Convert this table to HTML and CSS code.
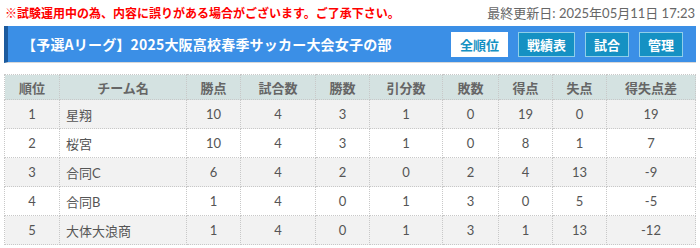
FILE: index.html
```html
<!DOCTYPE html>
<html lang="ja">
<head>
<meta charset="utf-8">
<link rel="stylesheet" href="styles.css">
</head>
<body>
<div class="page">
  <div class="topline">
    <span class="notice">※試験運用中の為、内容に誤りがある場合がございます。ご了承下さい。</span>
    <span class="updated">最終更新日: 2025年05月11日 17:23</span>
  </div>
  <div class="titlebar">
    <h1 class="title">【予選Aリーグ】2025大阪高校春季サッカー大会女子の部</h1>
    <nav class="btns">
      <a class="btn btn-active">全順位</a>
      <a class="btn">戦績表</a>
      <a class="btn">試合</a>
      <a class="btn">管理</a>
    </nav>
  </div>
  <table class="standings">
    <colgroup>
      <col class="c-rank"><col class="c-team"><col class="c-pts"><col class="c-gp"><col class="c-w">
      <col class="c-d"><col class="c-l"><col class="c-gf"><col class="c-ga"><col class="c-gd">
    </colgroup>
    <thead>
      <tr><th>順位</th><th>チーム名</th><th>勝点</th><th>試合数</th><th>勝数</th><th>引分数</th><th>敗数</th><th>得点</th><th>失点</th><th>得失点差</th></tr>
    </thead>
    <tbody>
      <tr><td>1</td><td class="team">星翔</td><td>10</td><td>4</td><td>3</td><td>1</td><td>0</td><td>19</td><td>0</td><td>19</td></tr>
      <tr><td>2</td><td class="team">桜宮</td><td>10</td><td>4</td><td>3</td><td>1</td><td>0</td><td>8</td><td>1</td><td>7</td></tr>
      <tr><td>3</td><td class="team">合同C</td><td>6</td><td>4</td><td>2</td><td>0</td><td>2</td><td>4</td><td>13</td><td>-9</td></tr>
      <tr><td>4</td><td class="team">合同B</td><td>1</td><td>4</td><td>0</td><td>1</td><td>3</td><td>0</td><td>5</td><td>-5</td></tr>
      <tr><td>5</td><td class="team">大体大浪商</td><td>1</td><td>4</td><td>0</td><td>1</td><td>3</td><td>1</td><td>13</td><td>-12</td></tr>
    </tbody>
  </table>
</div>
</body>
</html>
```

FILE: styles.css
```css
* { box-sizing: border-box; }
body {
  margin: 0;
  background: #fff;
  font-family: Lato, "Noto Sans CJK JP", sans-serif;
  color: #555;
}
.page { padding: 0 4px 0 4px; }
.topline {
  display: flex;
  justify-content: space-between;
  align-items: center;
  height: 26px;
  padding: 0 1px 2px 1px;
}
.notice {
  color: #f00;
  font-size: 12px;
  font-weight: bold;
  font-family: "Noto Sans CJK JP", sans-serif;
}
.updated {
  color: #666;
  font-size: 13px;
}
.titlebar {
  display: flex;
  align-items: center;
  justify-content: space-between;
  height: 37px;
  background: #3b8fe6;
  border-left: 4px solid #1b5a9e;
  border-bottom: 1px solid #d8d8d8;
  padding: 0 13px 0 14px;
}
.title {
  margin: 0;
  color: #fff;
  font-size: 14px;
  font-weight: bold;
  font-family: "Noto Sans CJK JP", sans-serif;
  letter-spacing: 0.2px;
}
.btns { display: flex; gap: 10px; }
.btn {
  display: block;
  height: 25px;
  line-height: 23px;
  padding: 0 8px;
  border: 1px solid #8fcfe9;
  background: #1591c3;
  color: #fff;
  font-size: 13px;
  font-weight: bold;
  font-family: "Noto Sans CJK JP", sans-serif;
}
.btn-active {
  background: #fff;
  color: #1591c3;
  border-color: #fff;
}
.standings {
  margin-top: 11px;
  width: 691px;
  table-layout: fixed;
  border-collapse: collapse;
  font-size: 13px;
  color: #555;
}
.c-rank { width: 55px; }
.c-team { width: 127px; }
.c-pts { width: 54px; }
.c-gp { width: 75px; }
.c-w { width: 54px; }
.c-d { width: 73px; }
.c-l { width: 56px; }
.c-gf { width: 54px; }
.c-ga { width: 54px; }
.c-gd { width: 89px; }
.standings th, .standings td {
  border: 1px dotted #c8c8c8;
  text-align: center;
  padding: 0;
}
.standings th {
  background: #d4e2e1;
  height: 25px;
  font-weight: bold;
  color: #666;
  font-family: "Noto Sans CJK JP", sans-serif;
  font-size: 13px;
}
.standings td { height: 29px; }
.standings tbody tr:nth-child(odd) td { background: #f2f2f2; }
.standings td.team { text-align: left; padding-left: 6px; }
```
